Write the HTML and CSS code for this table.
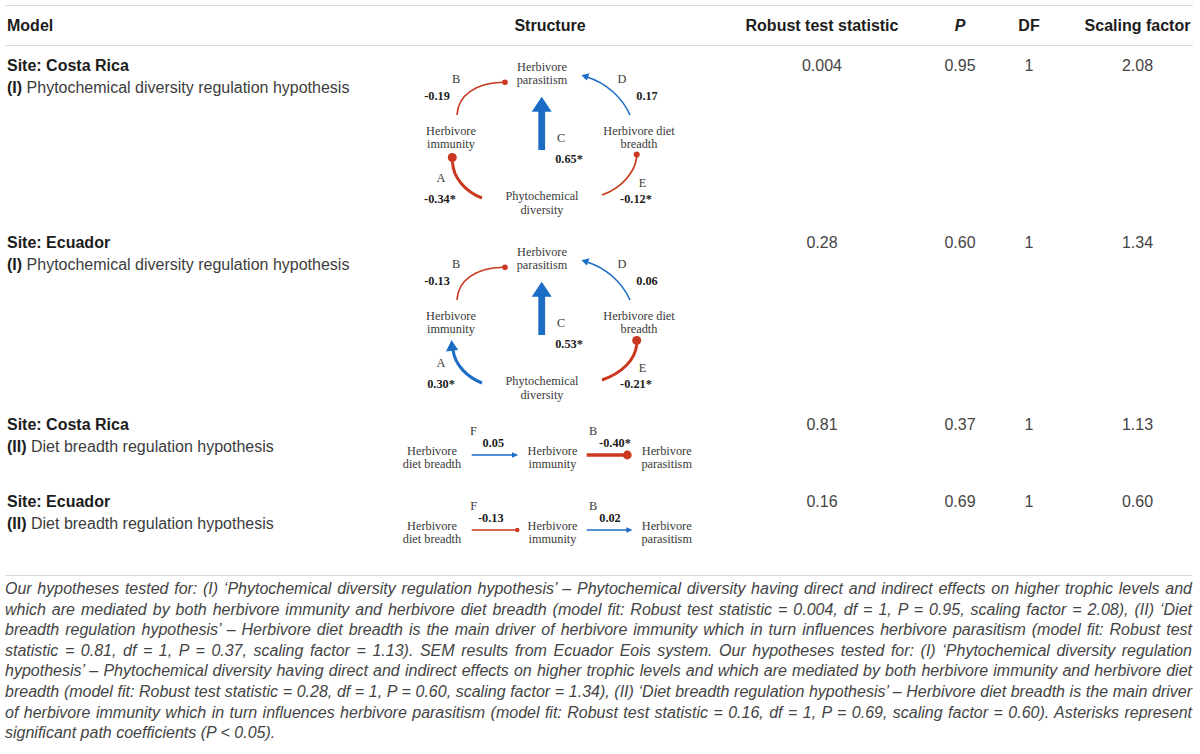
FILE: index.html
```html
<!DOCTYPE html>
<html lang="en">
<head>
    <meta charset="UTF-8">
    <meta name="viewport" content="width=device-width, initial-scale=1.0">
    <title>SEM model fit</title>
    <link rel="stylesheet" href="styles.css">
</head>
<body>
    <div class="sem-table">
        <div class="row head">
            <div class="model">Model</div>
            <div class="c">Structure</div>
            <div class="c">Robust test statistic</div>
            <div class="c"><i>P</i></div>
            <div class="c">DF</div>
            <div class="c">Scaling factor</div>
        </div>

        <!-- row 1 -->
        <div class="row item">
            <div class="model">
                <div class="site">Site: Costa Rica</div>
                <div><b>(I)</b> Phytochemical diversity regulation hypothesis</div>
            </div>
            <div class="structure">
                <svg class="sem" width="300" height="168" viewBox="400 55 300 168">
                    <g class="lbl">
                        <text x="542" y="71">Herbivore</text>
                        <text x="542" y="84">parasitism</text>
                        <text x="451" y="135">Herbivore</text>
                        <text x="451" y="148">immunity</text>
                        <text x="639" y="135">Herbivore diet</text>
                        <text x="639" y="148">breadth</text>
                        <text x="542" y="200">Phytochemical</text>
                        <text x="542" y="213.5">diversity</text>
                        <text x="456" y="83">B</text>
                        <text x="622" y="83">D</text>
                        <text x="561" y="141.5">C</text>
                        <text x="441" y="181.5">A</text>
                        <text x="642.5" y="186.5">E</text>
                    </g>
                    <g class="coef">
                        <text x="437" y="100">-0.19</text>
                        <text x="647" y="100">0.17</text>
                        <text x="569" y="163">0.65*</text>
                        <text x="440" y="203">-0.34*</text>
                        <text x="636" y="203">-0.12*</text>
                    </g>
                    <!-- B -->
                    <path class="neg" d="M457,115 C458,95 476,83 503,82.3" stroke-width="1.6"/>
                    <circle class="dot" cx="505" cy="82.3" r="2.8"/>
                    <!-- D -->
                    <path class="pos" d="M630,115 C622,97 606,83 587,77" stroke-width="1.6"/>
                    <polygon class="head" points="581.5,75.3 589.5,73.2 586.8,80.4"/>
                    <!-- C -->
                    <rect class="head" x="538.3" y="111" width="6.8" height="62.5"/>
                    <polygon class="head" points="531.7,111.7 551.7,111.7 541.7,96.7"/>
                    <!-- A -->
                    <path class="neg" d="M482,198 C466,192 453,178 452.5,162" stroke-width="3"/>
                    <circle class="dot" cx="452.3" cy="157.5" r="4.5"/>
                    <!-- E -->
                    <path class="neg" d="M602,195 C622,188 635,172 636.7,157" stroke-width="1.8"/>
                    <circle class="dot" cx="636.7" cy="154.5" r="3"/>
                </svg>
            </div>
            <div class="c">0.004</div>
            <div class="c">0.95</div>
            <div class="c">1</div>
            <div class="c">2.08</div>
        </div>

        <!-- row 2 -->
        <div class="row item">
            <div class="model">
                <div class="site">Site: Ecuador</div>
                <div><b>(I)</b> Phytochemical diversity regulation hypothesis</div>
            </div>
            <div class="structure">
                <svg class="sem" width="300" height="173" viewBox="400 232 300 173">
                    <g transform="translate(0,185)">
                        <g class="lbl">
                            <text x="542" y="71">Herbivore</text>
                            <text x="542" y="84">parasitism</text>
                            <text x="451" y="135">Herbivore</text>
                            <text x="451" y="148">immunity</text>
                            <text x="639" y="135">Herbivore diet</text>
                            <text x="639" y="148">breadth</text>
                            <text x="542" y="200">Phytochemical</text>
                            <text x="542" y="213.5">diversity</text>
                            <text x="456" y="83">B</text>
                            <text x="622" y="83">D</text>
                            <text x="561" y="141.5">C</text>
                            <text x="441" y="181.5">A</text>
                            <text x="642.5" y="186.5">E</text>
                        </g>
                        <g class="coef">
                            <text x="437" y="100">-0.13</text>
                            <text x="647" y="100">0.06</text>
                            <text x="569" y="163">0.53*</text>
                            <text x="441" y="203">0.30*</text>
                            <text x="636" y="203">-0.21*</text>
                        </g>
                        <path class="neg" d="M457,115 C458,95 476,83 503,82.3" stroke-width="1.6"/>
                        <circle class="dot" cx="505" cy="82.3" r="2.8"/>
                        <path class="pos" d="M630,115 C622,97 606,83 587,77" stroke-width="1.6"/>
                        <polygon class="head" points="581.5,75.3 589.5,73.2 586.8,80.4"/>
                        <rect class="head" x="538.3" y="111" width="6.8" height="62.5"/>
                        <polygon class="head" points="531.7,111.7 551.7,111.7 541.7,96.7"/>
                        <path class="pos" d="M482,198 C467,192 455,180 453,165" stroke-width="3"/>
                        <polygon class="head" points="451.5,155 446,166.5 458.2,165"/>
                        <path class="neg" d="M602,195 C622,188 635,175 636.7,160" stroke-width="3"/>
                        <circle class="dot" cx="636.7" cy="155.5" r="4.5"/>
                    </g>
                </svg>
            </div>
            <div class="c">0.28</div>
            <div class="c">0.60</div>
            <div class="c">1</div>
            <div class="c">1.34</div>
        </div>

        <!-- row 3 -->
        <div class="row item">
            <div class="model">
                <div class="site">Site: Costa Rica</div>
                <div><b>(II)</b> Diet breadth regulation hypothesis</div>
            </div>
            <div class="structure">
                <svg class="sem" width="300" height="68" viewBox="400 414 300 68">
                    <g class="lbl">
                        <text x="432" y="455">Herbivore</text>
                        <text x="432" y="468.3">diet breadth</text>
                        <text x="552.5" y="455">Herbivore</text>
                        <text x="552.5" y="468.3">immunity</text>
                        <text x="666.7" y="455">Herbivore</text>
                        <text x="666.7" y="468.3">parasitism</text>
                        <text x="473.3" y="435">F</text>
                        <text x="593" y="435">B</text>
                    </g>
                    <g class="coef">
                        <text x="493.3" y="446.7">0.05</text>
                        <text x="615" y="446.7">-0.40*</text>
                    </g>
                    <path class="pos" d="M471.7,455 L513,455" stroke-width="1.4"/>
                    <polygon class="head" points="518.3,455 512,452.2 512,457.8"/>
                    <path class="neg" d="M586.7,455 L625,455" stroke-width="3.6"/>
                    <circle class="dot" cx="627.3" cy="455" r="4.4"/>
                </svg>
            </div>
            <div class="c">0.81</div>
            <div class="c">0.37</div>
            <div class="c">1</div>
            <div class="c">1.13</div>
        </div>

        <!-- row 4 -->
        <div class="row item">
            <div class="model">
                <div class="site">Site: Ecuador</div>
                <div><b>(II)</b> Diet breadth regulation hypothesis</div>
            </div>
            <div class="structure">
                <svg class="sem" width="300" height="84" viewBox="400 491 300 84">
                    <g class="lbl">
                        <text x="432" y="530">Herbivore</text>
                        <text x="432" y="543.3">diet breadth</text>
                        <text x="552.5" y="530">Herbivore</text>
                        <text x="552.5" y="543.3">immunity</text>
                        <text x="666.7" y="530">Herbivore</text>
                        <text x="666.7" y="543.3">parasitism</text>
                        <text x="473.7" y="510">F</text>
                        <text x="593" y="510">B</text>
                    </g>
                    <g class="coef">
                        <text x="490.8" y="521.7">-0.13</text>
                        <text x="610" y="521.7">0.02</text>
                    </g>
                    <path class="neg" d="M471.7,530 L516,530" stroke-width="1.4"/>
                    <circle class="dot" cx="517.3" cy="530" r="2.2"/>
                    <path class="pos" d="M586.7,530 L627,530" stroke-width="1.4"/>
                    <polygon class="head" points="632.7,530 626.4,527.2 626.4,532.8"/>
                </svg>
            </div>
            <div class="c">0.16</div>
            <div class="c">0.69</div>
            <div class="c">1</div>
            <div class="c">0.60</div>
        </div>
    </div>

    <p class="footnote">Our hypotheses tested for: (I) ‘Phytochemical diversity regulation hypothesis’ – Phytochemical diversity having direct and indirect effects on higher trophic levels and which are mediated by both herbivore immunity and herbivore diet breadth (model fit: Robust test statistic = 0.004, df = 1, P = 0.95, scaling factor = 2.08), (II) ‘Diet breadth regulation hypothesis’ – Herbivore diet breadth is the main driver of herbivore immunity which in turn influences herbivore parasitism (model fit: Robust test statistic = 0.81, df = 1, P = 0.37, scaling factor = 1.13). SEM results from Ecuador Eois system. Our hypotheses tested for: (I) ‘Phytochemical diversity regulation hypothesis’ – Phytochemical diversity having direct and indirect effects on higher trophic levels and which are mediated by both herbivore immunity and herbivore diet breadth (model fit: Robust test statistic = 0.28, df = 1, P = 0.60, scaling factor = 1.34), (II) ‘Diet breadth regulation hypothesis’ – Herbivore diet breadth is the main driver of herbivore immunity which in turn influences herbivore parasitism (model fit: Robust test statistic = 0.16, df = 1, P = 0.69, scaling factor = 0.60). Asterisks represent significant path coefficients (P &lt; 0.05).</p>
</body>
</html>
```

FILE: styles.css
```css
body {
    font-family: "Liberation Sans", Arial, sans-serif;
    margin: 0;
    padding: 5px 0 0 5px;
    background-color: #fff;
    color: #3c3c3c;
}
.sem-table {
    width: 1188px;
}
.row {
    display: grid;
    grid-template-columns: 395px 300px 244px 32px 106px 111px;
}
.head {
    height: 39px;
    align-items: center;
    border-top: 1px solid #dadada;
    border-bottom: 1px solid #dadada;
    font-size: 16px;
    font-weight: bold;
    color: #1c1c1c;
}
.model {
    padding-left: 2px;
}
.c {
    text-align: center;
}
.item {
    padding-top: 9px;
    align-items: start;
    font-size: 16px;
    line-height: 22px;
}
.item .c {
    color: #444;
}
.site {
    font-weight: bold;
    color: #1c1c1c;
}
.item b {
    color: #1c1c1c;
}
.sem {
    display: block;
}
.sem text {
    font-family: "Liberation Serif", "Times New Roman", serif;
    font-size: 12.3px;
    text-anchor: middle;
}
.lbl text {
    fill: #3a3a3a;
}
.coef text {
    font-weight: bold;
    fill: #1c1c1c;
}
.neg {
    fill: none;
    stroke: #c9381f;
}
.dot {
    fill: #c9381f;
}
.pos {
    fill: none;
    stroke: #1b6dc6;
}
polygon.head,
rect.head {
    fill: #1b6dc6;
}
.footnote {
    width: 1187px;
    margin: 0;
    padding-top: 3px;
    border-top: 1px solid #dadada;
    font-size: 16px;
    font-style: italic;
    line-height: 20.6px;
    text-align: justify;
    color: #444;
}
```
